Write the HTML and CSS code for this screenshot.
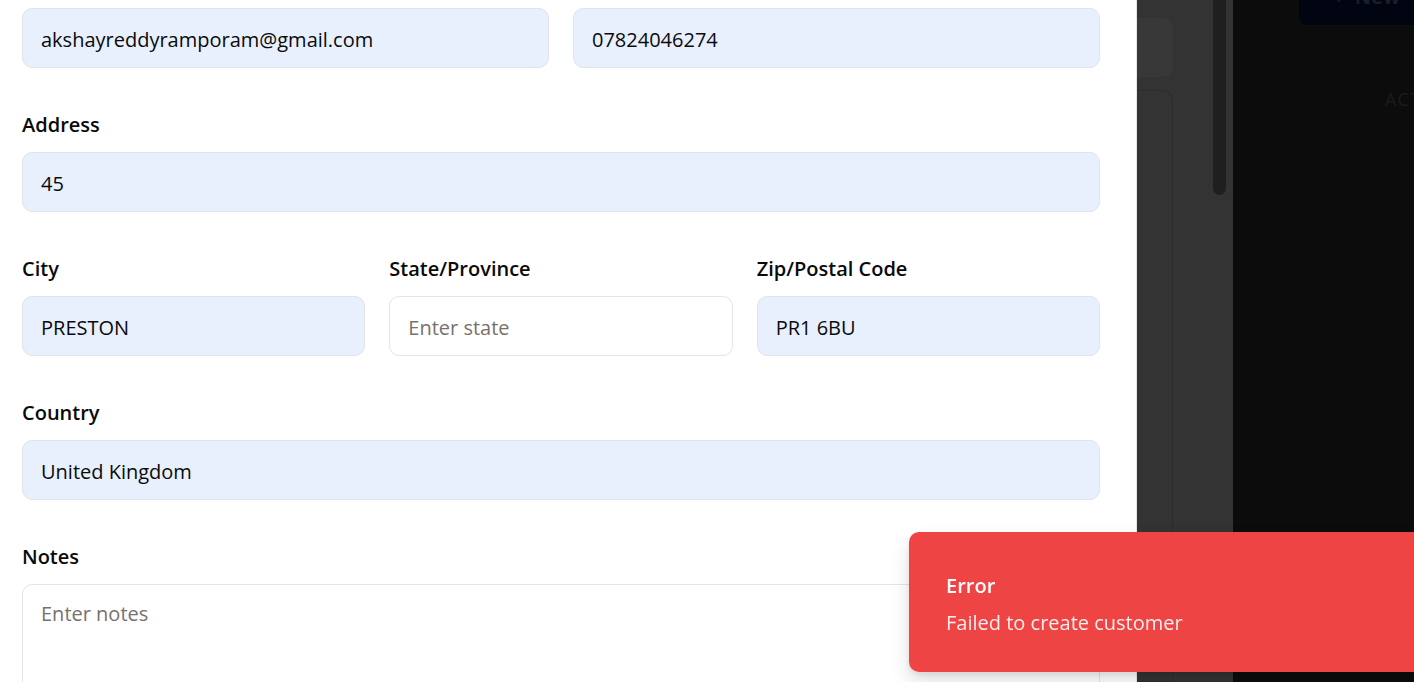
FILE: index.html
```html
<!DOCTYPE html>
<html lang="en">
<head>
<meta charset="utf-8">
<title>New Customer</title>
<link rel="stylesheet" href="styles.css">
</head>
<body>
<div class="screen">
  <section class="modal">
    <form class="form">
      <div class="row row-2">
        <div class="field">
          <input class="input filled" type="text" value="akshayreddyramporam@gmail.com" aria-label="Email">
        </div>
        <div class="field">
          <input class="input filled" type="text" value="07824046274" aria-label="Phone">
        </div>
      </div>
      <div class="row">
        <div class="field">
          <label class="label">Address</label>
          <input class="input filled" type="text" value="45">
        </div>
      </div>
      <div class="row row-3">
        <div class="field">
          <label class="label">City</label>
          <input class="input filled" type="text" value="PRESTON">
        </div>
        <div class="field">
          <label class="label">State/Province</label>
          <input class="input" type="text" placeholder="Enter state">
        </div>
        <div class="field">
          <label class="label">Zip/Postal Code</label>
          <input class="input filled" type="text" value="PR1 6BU">
        </div>
      </div>
      <div class="row">
        <div class="field">
          <label class="label">Country</label>
          <input class="input filled" type="text" value="United Kingdom">
        </div>
      </div>
      <div class="row">
        <div class="field">
          <label class="label">Notes</label>
          <textarea class="input textarea" placeholder="Enter notes"></textarea>
        </div>
      </div>
    </form>
  </section>
  <aside class="strip">
    <div class="strip-cards">
      <div class="strip-block"></div>
      <div class="strip-card"></div>
    </div>
    <div class="strip-scroll">
      <div class="scroll-thumb"></div>
    </div>
  </aside>
  <main class="page">
    <div class="page-top">
      <button class="new-btn" type="button">+&nbsp;&nbsp;New</button>
    </div>
    <div class="table-head">
      <span class="th">ACTIONS</span>
    </div>
  </main>
</div>
<div class="toast" role="alert">
  <div class="toast-title">Error</div>
  <div class="toast-desc">Failed to create customer</div>
</div>
</body>
</html>
```

FILE: styles.css
```css
* { box-sizing: border-box; }

html, body {
  margin: 0;
  padding: 0;
  height: 100%;
  overflow: hidden;
}

body {
  font-family: "Open Sans", "Noto Sans", sans-serif;
  color: #0a0a0a;
  background: #0c0c0c;
}

.screen {
  display: flex;
  height: 682px;
  overflow: hidden;
}

/* ---------- modal ---------- */
.modal {
  width: 1137px;
  flex: none;
  background: #ffffff;
  border-right: 1px solid #e6e6e6;
  padding: 8px 36px 0 22px;
  overflow: hidden;
}

.form {
  display: flex;
  flex-direction: column;
  gap: 42px;
}

.row-2 {
  display: grid;
  grid-template-columns: 1fr 1fr;
  column-gap: 24px;
}

.row-3 {
  display: grid;
  grid-template-columns: repeat(3, 1fr);
  column-gap: 24px;
}

.field {
  display: flex;
  flex-direction: column;
}

.label {
  font-size: 20px;
  line-height: 28px;
  font-weight: 600;
  color: #0a0a0a;
  padding-top: 1px;
  margin-bottom: 13px;
}

.input {
  height: 60px;
  width: 100%;
  border: 1px solid #e4e4e7;
  border-radius: 10px;
  padding: 2px 18px 0;
  font-family: inherit;
  font-size: 20px;
  color: #0a0a0a;
  background: #ffffff;
  outline: none;
}

.input.filled {
  background: #e8f0fe;
}

.input::placeholder {
  color: #78716c;
}

.textarea {
  height: 130px;
  padding-top: 15px;
  line-height: 28px;
  resize: none;
}

/* ---------- dimmed strip ---------- */
.strip {
  width: 96px;
  flex: none;
  background: #333333;
  display: flex;
}

.strip-cards {
  width: 36px;
  display: flex;
  flex-direction: column;
  padding-top: 18px;
  gap: 13px;
}

.strip-block {
  height: 59px;
  background: #383838;
  border-radius: 0 10px 10px 0;
}

.strip-card {
  flex: 1;
  border: 1px solid #2c2c2c;
  border-left: none;
  border-radius: 0 10px 0 0;
}

.strip-scroll {
  flex: 1;
  display: flex;
  justify-content: flex-end;
  padding-right: 7px;
}

.scroll-thumb {
  width: 13px;
  height: 195px;
  background: #1f1f1f;
  border-radius: 0 0 7px 7px;
}

/* ---------- page behind overlay ---------- */
.page {
  flex: 1;
  background: #0c0c0c;
  display: flex;
  flex-direction: column;
}

.page-top {
  padding-left: 66px;
  width: 100%;
}

.new-btn {
  display: flex;
  align-items: flex-start;
  height: 50px;
  margin-top: -25px;
  width: 200px;
  border: none;
  border-radius: 8px;
  background: #000511;
  color: #1a1e28;
  font-family: inherit;
  font-size: 20px;
  line-height: 28px;
  font-weight: 700;
  padding: 8px 0 0 34px;
  white-space: nowrap;
}

.table-head {
  width: 100%;
  padding: 62px 0 0 152px;
}

.th {
  font-size: 18px;
  letter-spacing: 1px;
  color: #1c1c1c;
  white-space: nowrap;
}

/* ---------- toast ---------- */
.toast {
  position: fixed;
  left: 909px;
  top: 532px;
  width: 530px;
  height: 140px;
  background: #ef4444;
  border-radius: 10px;
  padding: 40px 37px 0;
  color: #ffffff;
  box-shadow: 0 10px 20px rgba(0, 0, 0, 0.12), 0 3px 6px rgba(0, 0, 0, 0.08);
}

.toast-title {
  font-size: 20px;
  line-height: 28px;
  font-weight: 600;
}

.toast-desc {
  font-size: 20px;
  line-height: 28px;
  margin-top: 9px;
  opacity: 0.9;
}
```
